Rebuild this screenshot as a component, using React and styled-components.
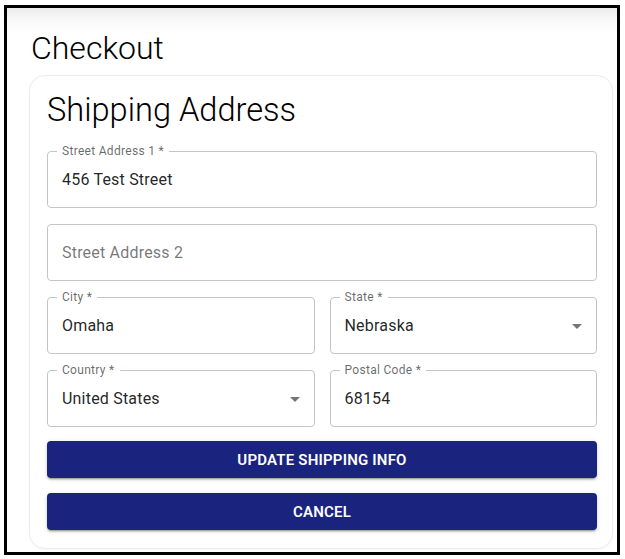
import React from "react";
import styled, { createGlobalStyle } from "styled-components";

const Global = createGlobalStyle`
  html, body { margin: 0; padding: 0; background: #fff; }
  body { font-family: Roboto, "Liberation Sans", Arial, sans-serif; }
  * { box-sizing: border-box; }
`;

const Frame = styled.div`
  margin: 5px 0 0 4px;
  width: 616px;
  height: 550px;
  border: 3px solid #000;
  background: linear-gradient(#ececec 0px, #fafafa 14px, #fff 26px);
  display: flex;
  flex-direction: column;
  padding: 0 4px 0 22px;
`;

const PageTitle = styled.h1`
  margin: 19px 0 0 2px;
  font-size: 32px;
  font-weight: 300;
  line-height: 42px;
  color: #000;
  letter-spacing: 0;
`;

const Card = styled.div`
  margin-top: 6px;
  border: 1px solid #ececec;
  border-radius: 16px;
  box-shadow: 0 1px 3px rgba(0, 0, 0, 0.04);
  background: #fff;
  padding: 13px 15px 16px 17px;
  display: flex;
  flex-direction: column;
  gap: 16px;
  height: 474px;
`;

const CardTitle = styled.h2`
  margin: 0 0 4px 0;
  font-size: 32.6px;
  font-weight: 300;
  line-height: 42px;
  color: #000;
`;

const Row = styled.div`
  display: grid;
  grid-template-columns: ${(p) => (p.$cols === 2 ? "1fr 1fr" : "1fr")};
  gap: 15px;
`;

const Field = styled.div`
  position: relative;
  height: 57px;
  border: 1px solid #c4c4c4;
  border-radius: 4px;
  display: flex;
  align-items: center;
  padding: 0 14px;
`;

const Label = styled.span`
  position: absolute;
  top: -8px;
  left: 9px;
  padding: 0 5px;
  background: #fff;
  font-size: 12px;
  line-height: 14px;
  letter-spacing: 0.3px;
  color: rgba(0, 0, 0, 0.6);
`;

const Value = styled.span`
  font-size: 16px;
  letter-spacing: 0.2px;
  color: ${(p) => (p.$placeholder ? "rgba(0,0,0,0.55)" : "rgba(0,0,0,0.87)")};
  flex: 1;
  margin-top: ${(p) => (p.$placeholder ? "0" : "-1px")};
`;

const Arrow = styled.svg`
  width: 24px;
  height: 24px;
  margin-right: -7px;
  fill: rgba(0, 0, 0, 0.54);
`;

const Button = styled.button`
  height: 37px;
  border: none;
  border-radius: 4px;
  background: #1a237e;
  color: #fff;
  font-family: Roboto, "Liberation Sans", sans-serif;
  font-size: 15px;
  font-weight: 600;
  letter-spacing: 0.2px;
  text-transform: uppercase;
  box-shadow: 0 3px 1px -2px rgba(0,0,0,0.2), 0 2px 2px 0 rgba(0,0,0,0.14), 0 1px 5px 0 rgba(0,0,0,0.12);
  cursor: pointer;
`;

const Buttons = styled.div`
  display: flex;
  flex-direction: column;
  gap: 15px;
  margin-top: -2px;
`;

function TextField({ label, value, placeholder, select }) {
  return (
    <Field>
      {label && <Label>{label}</Label>}
      <Value $placeholder={!!placeholder}>{value || placeholder}</Value>
      {select && (
        <Arrow viewBox="0 0 24 24">
          <path d="M7 10l5 5 5-5z" />
        </Arrow>
      )}
    </Field>
  );
}

export default function App() {
  return (
    <>
      <Global />
      <Frame>
        <PageTitle>Checkout</PageTitle>
        <Card>
          <CardTitle>Shipping Address</CardTitle>
          <Row>
            <TextField label="Street Address 1 *" value="456 Test Street" />
          </Row>
          <Row>
            <TextField placeholder="Street Address 2" />
          </Row>
          <Row $cols={2}>
            <TextField label="City *" value="Omaha" />
            <TextField label="State *" value="Nebraska" select />
          </Row>
          <Row $cols={2}>
            <TextField label="Country *" value="United States" select />
            <TextField label="Postal Code *" value="68154" />
          </Row>
          <Buttons>
            <Button>Update Shipping Info</Button>
            <Button>Cancel</Button>
          </Buttons>
        </Card>
      </Frame>
    </>
  );
}
